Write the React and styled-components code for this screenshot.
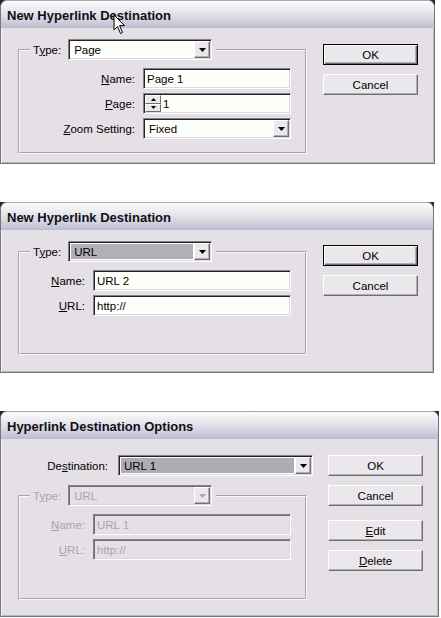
import React from "react";
import styled, { createGlobalStyle, css } from "styled-components";

const FONT = `"Liberation Sans", Arial, sans-serif`;
const FACE = "#e4e0e5";
const DISABLED = "#a8a5ad";

const GlobalStyle = createGlobalStyle`
  html, body { margin: 0; padding: 0; background: #ffffff; }
  body { font-family: ${FONT}; font-size: 11.5px; color: #000; }
  * { box-sizing: border-box; }
`;

const Page = styled.div`
  width: 441px;
  height: 618px;
  overflow: hidden;
  display: flex;
  flex-direction: column;
  align-items: flex-start;
`;

const Shell = styled.div`
  flex: none;
  width: ${(p) => p.$w}px;
  margin-top: ${(p) => p.$top}px;
  background: linear-gradient(#26262c 0 8px, transparent 8px);
`;

const Window = styled.section`
  position: relative;
  height: ${(p) => p.$h}px;
  display: flex;
  flex-direction: column;
  border: 1px solid #76747f;
  border-top-color: #a9a8b6;
  border-radius: 7px 7px 0 0;
  background: ${FACE};
`;

const TitleBar = styled.header`
  position: relative;
  flex: none;
  height: 27px;
  display: flex;
  align-items: center;
  padding: 1px 0 0 6px;
  border-radius: 6px 6px 0 0;
  background: linear-gradient(
    #fbfbfc 0%,
    #efeff3 25%,
    #dddde7 55%,
    #c9c8d6 85%,
    #bebdcd 100%
  );
  font: bold 13px ${FONT};
  color: #101018;
`;

const Cursor = styled.svg`
  position: absolute;
  left: 112px;
  top: 13px;
  z-index: 3;
`;

const Body = styled.div`
  flex: 1;
  display: flex;
  align-items: flex-start;
  gap: ${(p) => p.$gap}px;
  padding: ${(p) => p.$pt}px 0 0 17px;
  box-shadow: inset 1px 0 0 #f6f4f8, inset -1px 0 0 #b9b6be,
    inset 0 -1px 0 #b9b6be;
`;

const Main = styled.div`
  flex: none;
  width: ${(p) => p.$w}px;
  display: flex;
  flex-direction: column;
  gap: 9px;
`;

const ButtonColumn = styled.div`
  flex: none;
  width: 95px;
  display: flex;
  flex-direction: column;
  gap: 9px;
  padding-top: ${(p) => p.$pt}px;
`;

const Button = styled.button`
  width: 95px;
  height: 21px;
  margin: ${(p) => p.$mt || 0}px 0 0 0;
  padding: 0;
  font: 11.5px ${FONT};
  color: #000;
  background: #ebe8ec;
  border: 1px solid;
  border-color: #ffffff #6f6d76 #6f6d76 #ffffff;
  box-shadow: inset -1px -1px 0 #b0adb5;
  ${(p) =>
    p.$default &&
    css`
      border: 1px solid #000;
      box-shadow: inset 1px 1px 0 #fff, inset -1px -1px 0 #6f6d76,
        inset -2px -2px 0 #b0adb5;
    `}
`;

const Group = styled.fieldset`
  margin: 0;
  width: 289px;
  min-width: 0;
  padding: 0 14px ${(p) => p.$pb}px 0;
  border: 2px groove #f8f6ff;
`;

const Legend = styled.legend`
  margin-left: 10px;
  padding: 0 4px 0 3px;
  height: 21px;
  display: flex;
  align-items: center;
  gap: 7px;
  color: ${(p) => (p.$disabled ? DISABLED : "#000")};
`;

const FieldGrid = styled.div`
  display: grid;
  grid-template-columns: ${(p) => p.$label}px 1fr;
  grid-auto-rows: 21px;
  column-gap: 8px;
  row-gap: 4px;
  align-items: center;
  padding-top: 8px;
`;

const Label = styled.label`
  text-align: right;
  white-space: nowrap;
  color: ${(p) => (p.$disabled ? DISABLED : "#000")};
`;

const Key = styled.span`
  text-decoration: underline;
  text-underline-offset: 1px;
`;

const sunken = css`
  border: 1px solid;
  border-color: #84818b #ffffff #ffffff #84818b;
  box-shadow: inset 1px 1px 0
      ${(p) => (p.$disabled ? "#6e6b74" : "#242226")},
    inset -1px -1px 0 #dcd8de;
`;

const Field = styled.div`
  ${sunken};
  height: 21px;
  display: flex;
  align-items: center;
  padding: 0 3px 0 3px;
  background: ${(p) => (p.$disabled ? FACE : "#fefefb")};
  color: ${(p) => (p.$disabled ? DISABLED : "#000")};
  white-space: nowrap;
`;

const SpinField = styled(Field)`
  padding: 1px 3px 1px 1px;
  gap: 2px;
`;

const Spin = styled.div`
  width: 16px;
  height: 100%;
  flex: none;
  display: flex;
  flex-direction: column;
`;

const SpinBtn = styled.span`
  flex: 1;
  display: flex;
  align-items: center;
  justify-content: center;
  background: #ebe8ec;
  border: 1px solid;
  border-color: #ffffff #6f6d76 #6f6d76 #ffffff;
`;

const Combo = styled.div`
  ${sunken};
  width: ${(p) => (p.$w ? `${p.$w}px` : "auto")};
  height: 21px;
  display: flex;
  padding: 1px;
  background: ${(p) => (p.$disabled ? FACE : "#fefefb")};
  flex: none;
`;

const ComboValue = styled.span`
  flex: 1;
  display: flex;
  align-items: center;
  padding-left: 3px;
  margin: 1px 1px 1px 1px;
  background: ${(p) => p.$fill || "transparent"};
  color: ${(p) => (p.$disabled ? DISABLED : "#000")};
  white-space: nowrap;
`;

const ComboButton = styled.span`
  width: 16px;
  flex: none;
  display: flex;
  align-items: center;
  justify-content: center;
  background: #ebe8ec;
  border: 1px solid;
  border-color: #ffffff #6f6d76 #6f6d76 #ffffff;
  box-shadow: inset -1px -1px 0 #b0adb5;
`;

const DestRow = styled.div`
  display: grid;
  grid-template-columns: 90px 195px;
  column-gap: 10px;
  align-items: center;
  height: 21px;
`;

const Arrow = ({ up, color = "#000" }) => (
  <svg width="7" height="4" viewBox="0 0 7 4">
    <polygon
      points={up ? "3.5,0 7,4 0,4" : "0,0 7,0 3.5,4"}
      fill={color}
    />
  </svg>
);

const SmallArrow = ({ up }) => (
  <svg width="5" height="3" viewBox="0 0 5 3">
    <polygon points={up ? "2.5,0 5,3 0,3" : "0,0 5,0 2.5,3"} fill="#000" />
  </svg>
);

const Dropdown = ({ w, value, fill, disabled }) => (
  <Combo $w={w} $disabled={disabled}>
    <ComboValue $fill={fill} $disabled={disabled}>
      {value}
    </ComboValue>
    <ComboButton>
      <Arrow color={disabled ? "#a8a5ad" : "#000"} />
    </ComboButton>
  </Combo>
);

const Dialog = ({ width, height, top, title, cursor, bodyTop, gap, children }) => (
  <Shell $w={width} $top={top}>
    <Window $h={height}>
      <TitleBar>
        {title}
        {cursor && (
          <Cursor width="13" height="21" viewBox="0 0 13 21">
            <path
              d="M1 1 L1 16 L4.5 12.5 L7.5 19.5 L9.5 18.5 L6.6 11.6 L11.5 11.6 Z"
              fill="#fff"
              stroke="#000"
              strokeWidth="1"
              strokeLinejoin="miter"
            />
          </Cursor>
        )}
      </TitleBar>
      <Body $pt={bodyTop} $gap={gap}>
        {children}
      </Body>
    </Window>
  </Shell>
);

export default function App() {
  return (
    <>
      <GlobalStyle />
      <Page>
        <Dialog
          width={435}
          height={164}
          top={0}
          title="New Hyperlink Destination"
          cursor
          bodyTop={11}
          gap={16}
        >
          <Main $w={289}>
            <Group $pb={13}>
              <Legend>
                <span>
                  T<Key>y</Key>pe:
                </span>
                <Dropdown w={144} value="Page" />
              </Legend>
              <FieldGrid $label={115}>
                <Label>
                  <Key>N</Key>ame:
                </Label>
                <Field>Page 1</Field>
                <Label>
                  <Key>P</Key>age:
                </Label>
                <SpinField>
                  <Spin>
                    <SpinBtn>
                      <SmallArrow up />
                    </SpinBtn>
                    <SpinBtn>
                      <SmallArrow />
                    </SpinBtn>
                  </Spin>
                  1
                </SpinField>
                <Label>
                  <Key>Z</Key>oom Setting:
                </Label>
                <Dropdown value="Fixed" />
              </FieldGrid>
            </Group>
          </Main>
          <ButtonColumn $pt={5}>
            <Button $default>OK</Button>
            <Button>Cancel</Button>
          </ButtonColumn>
        </Dialog>

        <Dialog
          width={434}
          height={171}
          top={38}
          title="New Hyperlink Destination"
          bodyTop={11}
          gap={16}
        >
          <Main $w={289}>
            <Group $pb={37}>
              <Legend>
                <span>
                  T<Key>y</Key>pe:
                </span>
                <Dropdown w={144} value="URL" fill="#b2b0b7" />
              </Legend>
              <FieldGrid $label={65}>
                <Label>
                  <Key>N</Key>ame:
                </Label>
                <Field>URL 2</Field>
                <Label>
                  <Key>U</Key>RL:
                </Label>
                <Field>http://</Field>
              </FieldGrid>
            </Group>
          </Main>
          <ButtonColumn $pt={4}>
            <Button $default>OK</Button>
            <Button>Cancel</Button>
          </ButtonColumn>
        </Dialog>

        <Dialog
          width={439}
          height={206}
          top={38}
          title="Hyperlink Destination Options"
          bodyTop={16}
          gap={15}
        >
          <Main $w={295}>
            <DestRow>
              <Label>
                De<Key>s</Key>tination:
              </Label>
              <Dropdown w={195} value="URL 1" fill="#afadb4" />
            </DestRow>
            <Group $pb={38}>
              <Legend $disabled>
                <span>
                  T<Key>y</Key>pe:
                </span>
                <Dropdown w={144} value="URL" disabled />
              </Legend>
              <FieldGrid $label={65}>
                <Label $disabled>
                  <Key>N</Key>ame:
                </Label>
                <Field $disabled>URL 1</Field>
                <Label $disabled>
                  <Key>U</Key>RL:
                </Label>
                <Field $disabled>http://</Field>
              </FieldGrid>
            </Group>
          </Main>
          <ButtonColumn $pt={0}>
            <Button>OK</Button>
            <Button>Cancel</Button>
            <Button $mt={5}>
              <Key>E</Key>dit
            </Button>
            <Button>
              <Key>D</Key>elete
            </Button>
          </ButtonColumn>
        </Dialog>
      </Page>
    </>
  );
}
